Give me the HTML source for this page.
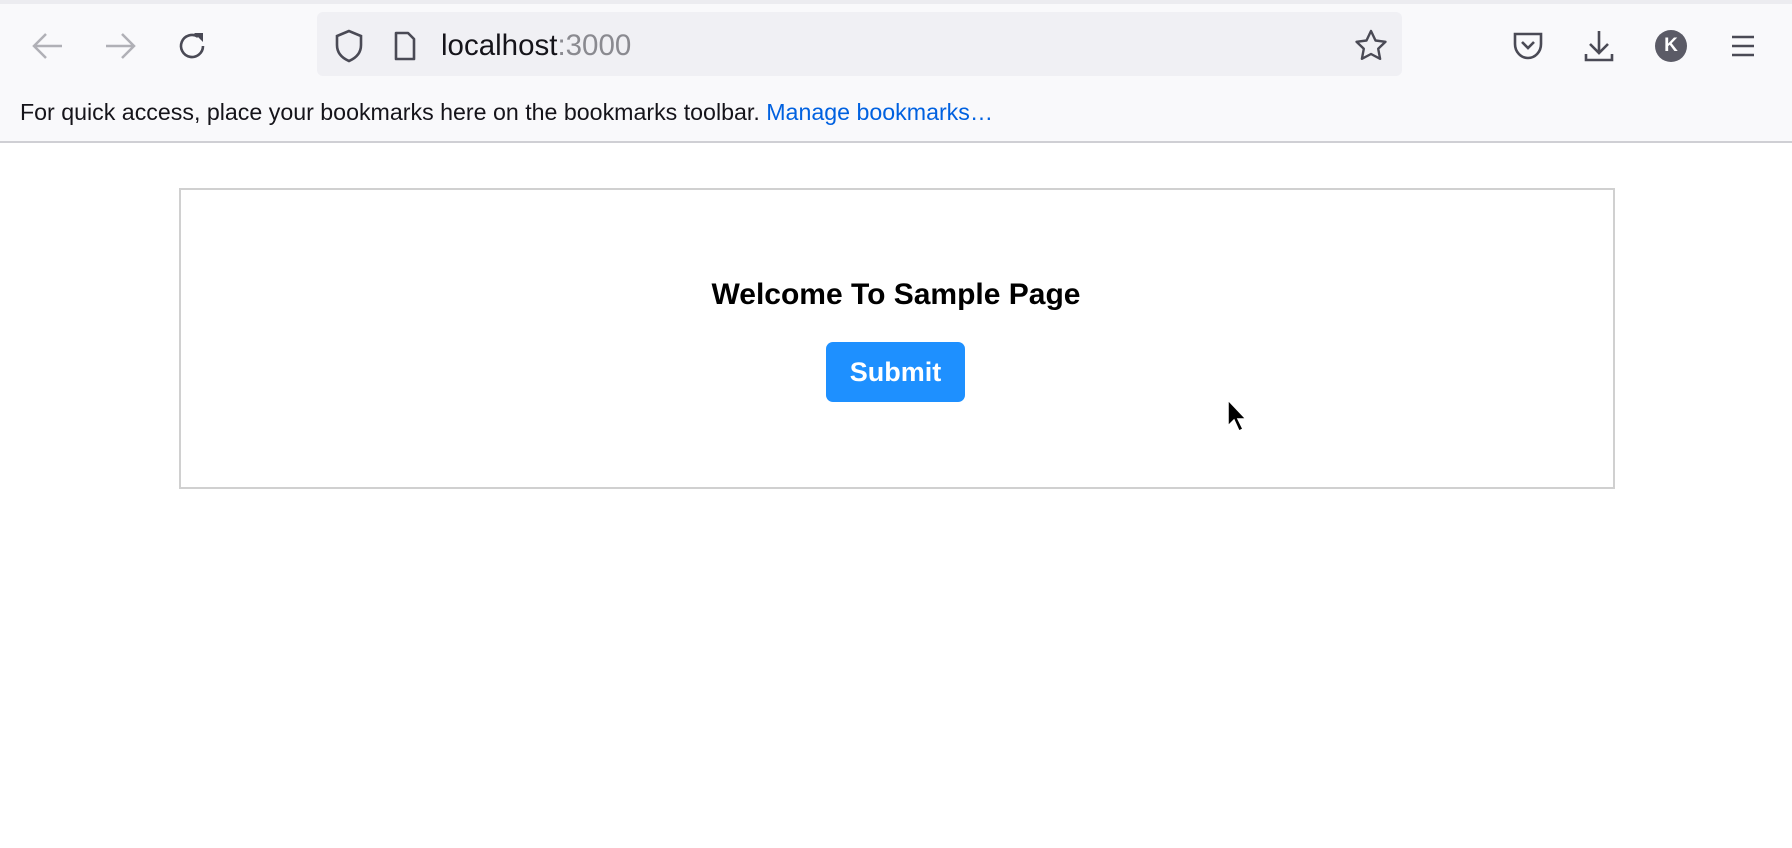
<!DOCTYPE html>
<html><head><style>
body{margin:0;width:1792px;height:848px;background:#fff;font-family:"Liberation Sans",sans-serif;position:relative;overflow:hidden}
.top{position:absolute;left:0;top:0;width:1792px;height:141px;background:#f9f9fb;border-bottom:2px solid #cfcfd4}
.strip{position:absolute;left:0;top:0;width:1792px;height:4px;background:#ececf0}
.url{position:absolute;left:317px;top:12px;width:1085px;height:64px;background:#f0f0f4;border-radius:6px}
.ic{position:absolute}
.bm{position:absolute;left:20px;top:99px;font-size:23.2px;color:#15141a;white-space:nowrap}
.bm a{color:#0061e0}
.box{position:absolute;left:179px;top:188px;width:1432px;height:297px;border:2px solid #d0d0d0}
h1{position:absolute;left:0;width:1792px;top:278px;margin:0;text-align:center;font-size:30px;font-weight:bold}
.btn{position:absolute;left:826px;top:342px;width:139px;height:60px;background:#1e90ff;border-radius:7px;color:#fff;font-weight:bold;font-size:27px;text-align:center;line-height:60px}
</style></head><body>
<div class="top"><div class="strip"></div>
<svg class="ic" style="left:30px;top:30px" width="36" height="32" viewBox="0 0 36 32"><path d="M32 16H4M16 4L4 16l12 12" fill="none" stroke="#b0b0b6" stroke-width="2.5"/></svg>
<svg class="ic" style="left:102px;top:30px" width="36" height="32" viewBox="0 0 36 32"><path d="M4 16h28M20 4l12 12-12 12" fill="none" stroke="#b0b0b6" stroke-width="2.5"/></svg>
<svg class="ic" style="left:176px;top:30px" width="32" height="32" viewBox="0 0 32 32"><path d="M27 16A11 11 0 1 1 22 6.8" fill="none" stroke="#4a4a55" stroke-width="2.6"/><path d="M18 3h9v9z" fill="#4a4a55"/></svg>
<div class="url"></div>
<svg class="ic" style="left:333px;top:28px" width="32" height="36" viewBox="0 0 32 36"><path d="M16 3L4 8v9c0 8 5 13 12 16 7-3 12-8 12-16V8z" fill="none" stroke="#4a4a55" stroke-width="2.6"/></svg>
<svg class="ic" style="left:392px;top:29px" width="26" height="34" viewBox="0 0 26 34"><path d="M4 4h12l6 6v20H4z" fill="none" stroke="#4a4a55" stroke-width="2.6" stroke-linejoin="round"/></svg>
<div style="position:absolute;left:441px;top:29px;font-size:29.5px;color:#15141a">localhost<span style="color:#8a8a90">:3000</span></div>
<svg class="ic" style="left:1353px;top:28px" width="36" height="36" viewBox="0 0 36 36"><path d="M18 3l4.5 9.5 10 1.3-7.3 7 1.9 10L18 26l-9.1 4.8 1.9-10-7.3-7 10-1.3z" fill="none" stroke="#4a4a55" stroke-width="2.4" stroke-linejoin="round"/></svg>
<svg class="ic" style="left:1511px;top:30px" width="34" height="32" viewBox="0 0 34 32"><path d="M4 4h26v10c0 8-6 14-13 14S4 22 4 14z" fill="none" stroke="#4a4a55" stroke-width="2.6"/><path d="M11 12l6 6 6-6" fill="none" stroke="#4a4a55" stroke-width="2.6"/></svg>
<svg class="ic" style="left:1583px;top:28px" width="32" height="36" viewBox="0 0 32 36"><path d="M16 3v22M7 16l9 9 9-9M3 26v6h26v-6" fill="none" stroke="#4a4a55" stroke-width="2.6"/></svg>
<div style="position:absolute;left:1655px;top:30px;width:32px;height:32px;border-radius:50%;background:#5b5b66;color:#fff;font-weight:bold;font-size:19px;text-align:center;line-height:32px">K</div>
<svg class="ic" style="left:1729px;top:32px" width="28" height="28" viewBox="0 0 28 28"><path d="M3 5h22M3 14h22M3 23h22" stroke="#4a4a55" stroke-width="2.6"/></svg>
<div class="bm">For quick access, place your bookmarks here on the bookmarks toolbar. <a>Manage bookmarks…</a></div>
</div>
<div class="box"></div>
<h1>Welcome To Sample Page</h1>
<div class="btn">Submit</div>
<svg class="ic" style="left:1226px;top:398px" width="22" height="36" viewBox="0 0 22 36"><path d="M2 2v26l6-6 5 11 4-2-5-10h8z" fill="#000" stroke="#fff" stroke-width="1.5"/></svg>
</body></html>
